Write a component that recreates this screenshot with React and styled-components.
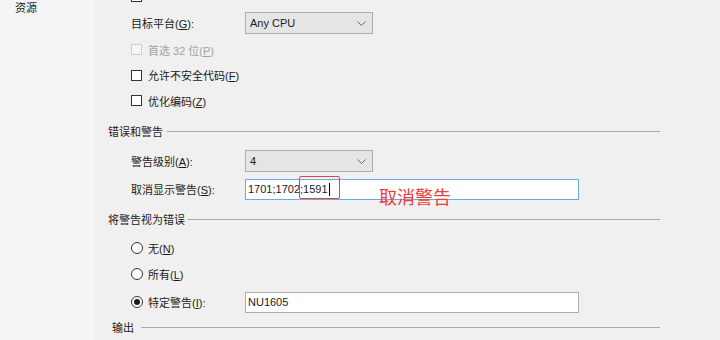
import React from 'react'
import styled, { createGlobalStyle } from 'styled-components'

const GlobalStyle = createGlobalStyle`
  html, body {
    margin: 0;
    padding: 0;
    background: #f0f0f0;
  }
  body {
    font-family: "Liberation Sans", "Noto Sans CJK SC", sans-serif;
    font-size: 11px;
    color: #1b1b1b;
  }
`

const Page = styled.div`
  display: flex;
  width: 720px;
  height: 340px;
  overflow: hidden;
  background: #f0f0f0;
`

const Sidebar = styled.div`
  width: 95px;
  flex: none;
  background: #f5f5f5;
  padding: 2px 0 0 15px;
  box-sizing: border-box;
`

const NavItem = styled.div`
  height: 13px;
  line-height: 13px;
  font-size: 11px;
`

const Main = styled.div`
  flex: 1;
  display: flex;
  flex-direction: column;
  padding: 0 60px 0 13px;
`

const Row = styled.div`
  display: flex;
  align-items: center;
  flex: none;
  height: ${p => p.$h}px;
  padding-left: 23px;
  margin-top: ${p => p.$top || 0}px;
  color: ${p => (p.$disabled ? '#a3a3a3' : '#1b1b1b')};
`

const Label = styled.span`
  width: ${p => p.$w || 114}px;
  flex: none;
  white-space: nowrap;
`

const Text = styled.span`
  white-space: nowrap;
`

const Box = styled.span`
  width: 11px;
  height: 11px;
  box-sizing: border-box;
  flex: none;
  margin-right: 6px;
  border: 1px solid ${p => (p.$disabled ? '#cccccc' : '#333333')};
  background: ${p => (p.$disabled ? '#f6f6f6' : '#ffffff')};
`

const Radio = styled.span`
  width: 12px;
  height: 12px;
  box-sizing: border-box;
  flex: none;
  margin-right: 5px;
  border: 1px solid #333;
  border-radius: 50%;
  background: #fff;
  display: flex;

  &::after {
    content: '';
    margin: auto;
    width: 6px;
    height: 6px;
    border-radius: 50%;
    background: ${p => (p.$checked ? '#1b1b1b' : 'transparent')};
  }
`

const Select = styled.div`
  width: 128px;
  height: 22px;
  box-sizing: border-box;
  border: 1px solid #adadad;
  background: #e5e5e5;
  display: flex;
  align-items: center;
  justify-content: space-between;
  padding: 0 6px 0 4px;

  svg {
    display: block;
  }
`

const InputWrap = styled.div`
  position: relative;
  width: 334px;
  height: 21px;
`

const Input = styled.div`
  height: 100%;
  box-sizing: border-box;
  border: 1px solid ${p => (p.$focus ? '#6aa9e6' : '#acacac')};
  background: #fff;
  display: flex;
  align-items: center;
  padding-left: 2px;
  white-space: nowrap;
`

const Caret = styled.span`
  display: inline-block;
  width: 1px;
  height: 13px;
  background: #000;
  margin-left: 1px;
`

const RedBox = styled.div`
  position: absolute;
  left: 54px;
  top: -3px;
  width: 41px;
  height: 23px;
  box-sizing: border-box;
  border: 1px solid #e2453d;
  border-radius: 2px;
`

const RedNote = styled.div`
  position: absolute;
  left: 134px;
  top: 8px;
  font-family: "Noto Sans CJK SC", sans-serif;
  font-size: 18px;
  line-height: 18px;
  color: #e8403a;
  white-space: nowrap;
`

const Heading = styled.div`
  display: flex;
  align-items: center;
  flex: none;
  height: ${p => p.$h}px;
  padding-left: ${p => p.$indent || 0}px;

  &::after {
    content: '';
    flex: 1;
    margin-left: ${p => p.$gap || 4}px;
    border-top: 1px solid #a9a9a9;
  }
`

const Chevron = () => (
  <svg width="9" height="5" viewBox="0 0 9 5">
    <path d="M0.5 0.5 L4.5 4.5 L8.5 0.5" fill="none" stroke="#6a6a6a" strokeWidth="1" />
  </svg>
)

export default function App() {
  return (
    <>
      <GlobalStyle />
      <Page>
        <Sidebar>
          <NavItem>资源</NavItem>
        </Sidebar>
        <Main>
          {/* row scrolled off the top, only the checkbox edge shows */}
          <Row $h={25} $top={-16}>
            <Box />
          </Row>
          <Row $h={28}>
            <Label>目标平台(<u>G</u>):</Label>
            <Select>
              <span>Any CPU</span>
              <Chevron />
            </Select>
          </Row>
          <Row $h={25} $disabled>
            <Box $disabled />
            <Text>首选 32 位(<u>P</u>)</Text>
          </Row>
          <Row $h={26}>
            <Box />
            <Text>允许不安全代码(<u>F</u>)</Text>
          </Row>
          <Row $h={25}>
            <Box />
            <Text>优化编码(<u>Z</u>)</Text>
          </Row>

          <Heading $h={36}>错误和警告</Heading>
          <Row $h={24}>
            <Label>警告级别(<u>A</u>):</Label>
            <Select>
              <span>4</span>
              <Chevron />
            </Select>
          </Row>
          <Row $h={32}>
            <Label>取消显示警告(<u>S</u>):</Label>
            <InputWrap>
              <Input $focus>
                1701;1702;1591<Caret />
              </Input>
              <RedBox />
              <RedNote>取消警告</RedNote>
            </InputWrap>
          </Row>

          <Heading $h={28} $gap={2}>将警告视为错误</Heading>
          <Row $h={29}>
            <Radio />
            <Text>无(<u>N</u>)</Text>
          </Row>
          <Row $h={24}>
            <Radio />
            <Text>所有(<u>L</u>)</Text>
          </Row>
          <Row $h={32}>
            <Radio $checked />
            <Label $w={97}>特定警告(<u>I</u>):</Label>
            <InputWrap>
              <Input>NU1605</Input>
            </InputWrap>
          </Row>

          <Heading $h={18} $indent={4} $gap={7}>输出</Heading>
        </Main>
      </Page>
    </>
  )
}
